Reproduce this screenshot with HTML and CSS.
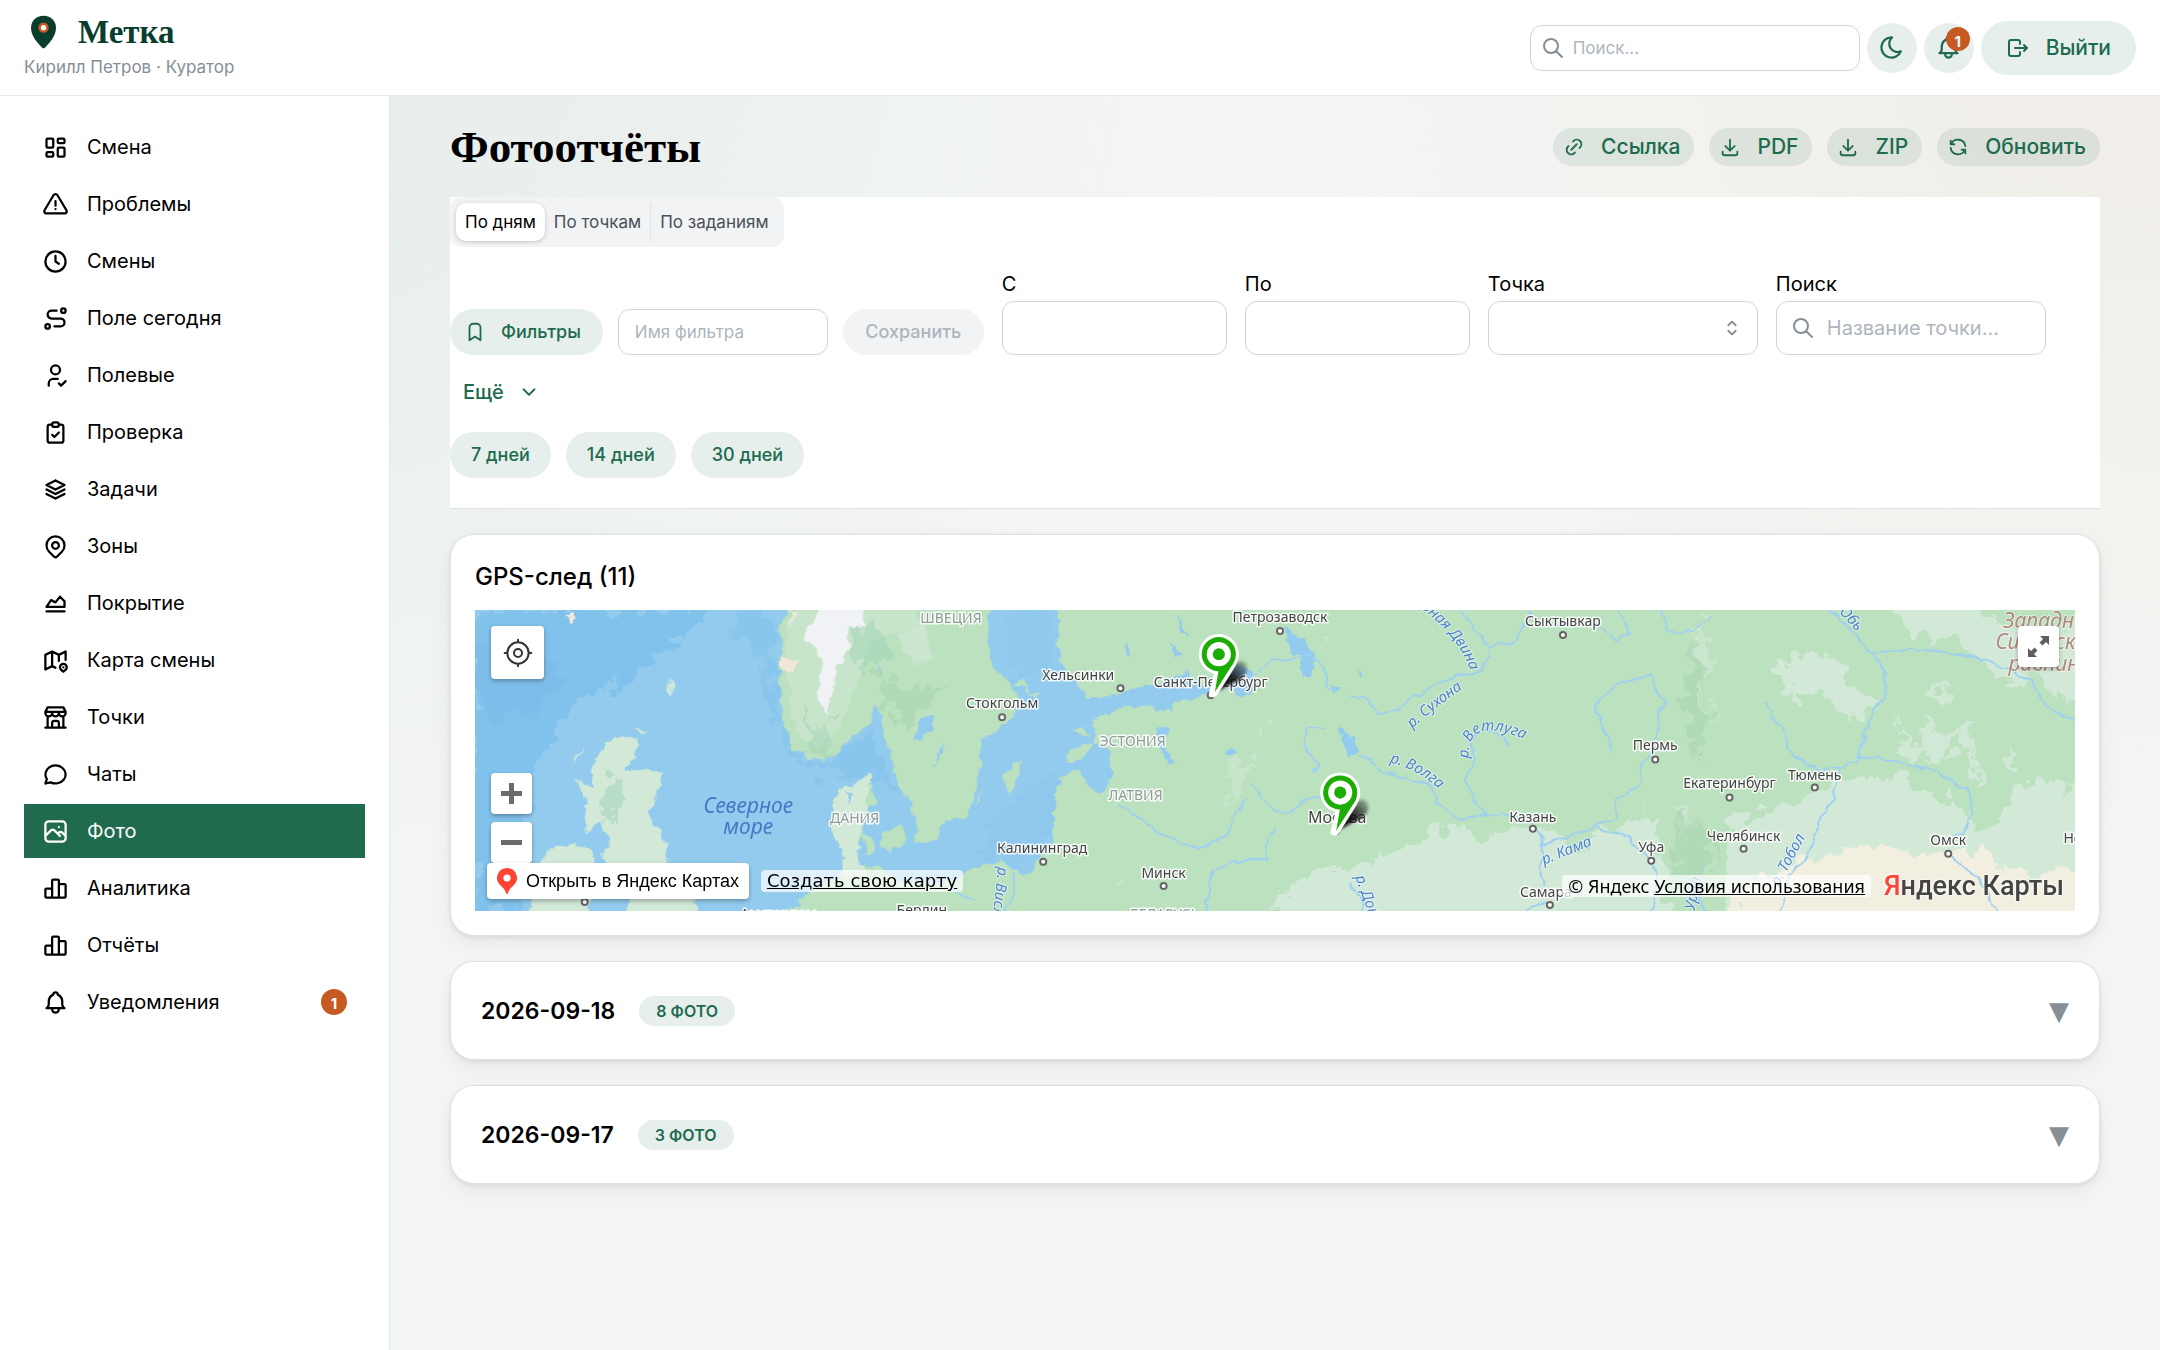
FILE: index.html
```html
<!DOCTYPE html>
<html lang="ru">
<head>
<meta charset="utf-8">
<meta name="viewport" content="width=device-width, initial-scale=1">
<title>Фотоотчёты — Метка</title>
<link rel="stylesheet" href="styles.css">
</head>
<body>
<svg class="sprite" aria-hidden="true">
  <symbol id="i-dashboard" viewBox="0 0 24 24"><path d="M5 4h4a1 1 0 0 1 1 1v6a1 1 0 0 1-1 1h-4a1 1 0 0 1-1-1v-6a1 1 0 0 1 1-1M5 16h4a1 1 0 0 1 1 1v2a1 1 0 0 1-1 1h-4a1 1 0 0 1-1-1v-2a1 1 0 0 1 1-1M15 12h4a1 1 0 0 1 1 1v6a1 1 0 0 1-1 1h-4a1 1 0 0 1-1-1v-6a1 1 0 0 1 1-1M15 4h4a1 1 0 0 1 1 1v2a1 1 0 0 1-1 1h-4a1 1 0 0 1-1-1v-2a1 1 0 0 1 1-1"/></symbol>
  <symbol id="i-alert" viewBox="0 0 24 24"><path d="M12 9v4M10.363 3.591l-8.106 13.534a1.914 1.914 0 0 0 1.636 2.871h16.214a1.914 1.914 0 0 0 1.636-2.87l-8.106-13.536a1.914 1.914 0 0 0-3.274 0zM12 16h.01"/></symbol>
  <symbol id="i-clock" viewBox="0 0 24 24"><path d="M3 12a9 9 0 1 0 18 0a9 9 0 0 0-18 0M12 7v5l3 2"/></symbol>
  <symbol id="i-route" viewBox="0 0 24 24"><path d="M3 19a2 2 0 1 0 4 0a2 2 0 0 0-4 0M19 7a2 2 0 1 0 0-4a2 2 0 0 0 0 4zM11 19h5.5a3.5 3.5 0 0 0 0-7h-8a3.5 3.5 0 0 1 0-7h4.5"/></symbol>
  <symbol id="i-user" viewBox="0 0 24 24"><path d="M8 7a4 4 0 1 0 8 0a4 4 0 0 0-8 0M6 21v-2a4 4 0 0 1 4-4h4M15 19l2 2l4-4"/></symbol>
  <symbol id="i-clipboard" viewBox="0 0 24 24"><path d="M9 5h-2a2 2 0 0 0-2 2v12a2 2 0 0 0 2 2h10a2 2 0 0 0 2-2v-12a2 2 0 0 0-2-2h-2M9 5a2 2 0 0 1 2-2h2a2 2 0 0 1 2 2a2 2 0 0 1-2 2h-2a2 2 0 0 1-2-2zM9 14l2 2l4-4"/></symbol>
  <symbol id="i-stack" viewBox="0 0 24 24"><path d="M12 4l-8 4l8 4l8-4l-8-4M4 12l8 4l8-4M4 16l8 4l8-4"/></symbol>
  <symbol id="i-pin" viewBox="0 0 24 24"><path d="M9 11a3 3 0 1 0 6 0a3 3 0 0 0-6 0M17.657 16.657l-4.243 4.243a2 2 0 0 1-2.827 0l-4.244-4.243a8 8 0 1 1 11.314 0z"/></symbol>
  <symbol id="i-area" viewBox="0 0 24 24"><path d="M4 19h16M4 15l4-6l4 2l4-5l4 4v5h-16"/></symbol>
  <symbol id="i-map" viewBox="0 0 24 24"><path d="M12 18.5l-3-1.5l-6 3v-13l6-3l6 3l6-3v7.5M9 4v13M15 7v5.5M21.121 20.121a3 3 0 1 0-4.242 0c.418.419 1.125 1.045 2.121 1.879c1.051-.89 1.759-1.516 2.121-1.879zM19 18v.01"/></symbol>
  <symbol id="i-store" viewBox="0 0 24 24"><path d="M3 21h18M3 7v1a3 3 0 0 0 6 0v-1m0 1a3 3 0 0 0 6 0v-1m0 1a3 3 0 0 0 6 0v-1h-18l2-4h14l2 4M5 21v-10.15M19 21v-10.15M9 21v-4a2 2 0 0 1 2-2h2a2 2 0 0 1 2 2v4"/></symbol>
  <symbol id="i-chat" viewBox="0 0 24 24"><path d="M3 20l1.3-3.9c-2.324-3.437-1.426-7.872 2.1-10.374c3.526-2.501 8.59-2.296 11.845.48c3.255 2.777 3.695 7.266 1.029 10.501c-2.666 3.235-7.615 4.215-11.574 2.293l-4.7 1"/></symbol>
  <symbol id="i-photo" viewBox="0 0 24 24"><path d="M15 8h.01M3 6a3 3 0 0 1 3-3h12a3 3 0 0 1 3 3v12a3 3 0 0 1-3 3h-12a3 3 0 0 1-3-3zM3 16l5-5c.928-.893 2.072-.893 3 0l5 5M14 14l1-1c.928-.893 2.072-.893 3 0l3 3"/></symbol>
  <symbol id="i-bars" viewBox="0 0 24 24"><path d="M3 13a1 1 0 0 1 1-1h4a1 1 0 0 1 1 1v6a1 1 0 0 1-1 1h-4a1 1 0 0 1-1-1zM15 9a1 1 0 0 1 1-1h4a1 1 0 0 1 1 1v10a1 1 0 0 1-1 1h-4a1 1 0 0 1-1-1zM9 5a1 1 0 0 1 1-1h4a1 1 0 0 1 1 1v14a1 1 0 0 1-1 1h-4a1 1 0 0 1-1-1zM4 20h14"/></symbol>
  <symbol id="i-bell" viewBox="0 0 24 24"><path d="M10 5a2 2 0 1 1 4 0a7 7 0 0 1 4 6v3a4 4 0 0 0 2 3h-16a4 4 0 0 0 2-3v-3a7 7 0 0 1 4-6M9 17v1a3 3 0 0 0 6 0v-1"/></symbol>
  <symbol id="i-search" viewBox="0 0 24 24"><path d="M3 10a7 7 0 1 0 14 0a7 7 0 1 0-14 0M21 21l-6-6"/></symbol>
  <symbol id="i-moon" viewBox="0 0 24 24"><path d="M12 3c.132 0 .263 0 .393 0a7.5 7.5 0 0 0 7.92 12.446a9 9 0 1 1-8.313-12.454z"/></symbol>
  <symbol id="i-logout" viewBox="0 0 24 24"><path d="M14 8v-2a2 2 0 0 0-2-2h-7a2 2 0 0 0-2 2v12a2 2 0 0 0 2 2h7a2 2 0 0 0 2-2v-2M9 12h12l-3-3M18 15l3-3"/></symbol>
  <symbol id="i-link" viewBox="0 0 24 24"><path d="M9 15l6-6M11 6l.463-.536a5 5 0 0 1 7.071 7.072l-.534.464M13 18l-.397.534a5.068 5.068 0 0 1-7.127 0a4.972 4.972 0 0 1 0-7.071l.524-.463"/></symbol>
  <symbol id="i-download" viewBox="0 0 24 24"><path d="M4 17v2a2 2 0 0 0 2 2h12a2 2 0 0 0 2-2v-2M7 11l5 5l5-5M12 4v12"/></symbol>
  <symbol id="i-refresh" viewBox="0 0 24 24"><path d="M20 11a8.1 8.1 0 0 0-15.5-2m-.5-4v4h4M4 13a8.1 8.1 0 0 0 15.5 2m.5 4v-4h-4"/></symbol>
  <symbol id="i-bookmark" viewBox="0 0 24 24"><path d="M18 7v14l-6-4l-6 4v-14a4 4 0 0 1 4-4h4a4 4 0 0 1 4 4z"/></symbol>
  <symbol id="i-chevron" viewBox="0 0 24 24"><path d="M6 9l6 6l6-6"/></symbol>
  <symbol id="i-selector" viewBox="0 0 24 24"><path d="M8 9l4-4l4 4M16 15l-4 4l-4-4"/></symbol>
  <symbol id="i-locate" viewBox="0 0 24 24"><path d="M9 12a3 3 0 1 0 6 0a3 3 0 1 0-6 0M4 12a8 8 0 1 0 16 0a8 8 0 1 0-16 0M12 2v2M12 20v2M20 12h2M2 12h2"/></symbol>
</svg>

<header class="topbar">
  <div class="brand">
    <a class="brand-name" href="#">
      <svg class="brand-pin" viewBox="0 0 26 34" aria-hidden="true"><path fill="#0b3d2e" d="M13 0C5.300 0 0 5.300 0 12.600c0 8.600 6.900 16.100 11.500 20.700a2.200 2.200 0 0 0 3 0C19.100 28.700 26 21.200 26 12.600 26 5.300 20.700 0 13 0z"/><circle cx="13" cy="12.500" r="5.400" fill="#c65a22"/><circle cx="13" cy="12.500" r="2.700" fill="#fff"/></svg>
      <span>Метка</span>
    </a>
    <div class="brand-user">Кирилл Петров · Куратор</div>
  </div>
  <div class="top-tools">
    <label class="search-box top-search"><svg class="icon"><use href="#i-search"/></svg><input type="search" placeholder="Поиск..." aria-label="Поиск"></label>
    <button class="round-btn" aria-label="Тёмная тема"><svg class="icon icon-lg"><use href="#i-moon"/></svg></button>
    <button class="round-btn" aria-label="Уведомления"><svg class="icon icon-lg"><use href="#i-bell"/></svg><span class="count count-over">1</span></button>
    <button class="btn btn-exit"><svg class="icon"><use href="#i-logout"/></svg>Выйти</button>
  </div>
</header>

<div class="shell">
  <nav class="sidebar" aria-label="Разделы">
    <a class="nav-item" href="#"><svg class="icon icon-lg"><use href="#i-dashboard"/></svg>Смена</a>
    <a class="nav-item" href="#"><svg class="icon icon-lg"><use href="#i-alert"/></svg>Проблемы</a>
    <a class="nav-item" href="#"><svg class="icon icon-lg"><use href="#i-clock"/></svg>Смены</a>
    <a class="nav-item" href="#"><svg class="icon icon-lg"><use href="#i-route"/></svg>Поле сегодня</a>
    <a class="nav-item" href="#"><svg class="icon icon-lg"><use href="#i-user"/></svg>Полевые</a>
    <a class="nav-item" href="#"><svg class="icon icon-lg"><use href="#i-clipboard"/></svg>Проверка</a>
    <a class="nav-item" href="#"><svg class="icon icon-lg"><use href="#i-stack"/></svg>Задачи</a>
    <a class="nav-item" href="#"><svg class="icon icon-lg"><use href="#i-pin"/></svg>Зоны</a>
    <a class="nav-item" href="#"><svg class="icon icon-lg"><use href="#i-area"/></svg>Покрытие</a>
    <a class="nav-item" href="#"><svg class="icon icon-lg"><use href="#i-map"/></svg>Карта смены</a>
    <a class="nav-item" href="#"><svg class="icon icon-lg"><use href="#i-store"/></svg>Точки</a>
    <a class="nav-item" href="#"><svg class="icon icon-lg"><use href="#i-chat"/></svg>Чаты</a>
    <a class="nav-item active" href="#" aria-current="page"><svg class="icon icon-lg"><use href="#i-photo"/></svg>Фото</a>
    <a class="nav-item" href="#"><svg class="icon icon-lg"><use href="#i-bars"/></svg>Аналитика</a>
    <a class="nav-item" href="#"><svg class="icon icon-lg"><use href="#i-bars"/></svg>Отчёты</a>
    <a class="nav-item" href="#"><svg class="icon icon-lg"><use href="#i-bell"/></svg>Уведомления<span class="count count-end">1</span></a>
  </nav>

  <main class="content">
    <div class="page-head">
      <h1>Фотоотчёты</h1>
      <div class="actions">
        <button class="btn btn-action"><svg class="icon icon-sm"><use href="#i-link"/></svg>Ссылка</button>
        <button class="btn btn-action"><svg class="icon icon-sm"><use href="#i-download"/></svg>PDF</button>
        <button class="btn btn-action"><svg class="icon icon-sm"><use href="#i-download"/></svg>ZIP</button>
        <button class="btn btn-action"><svg class="icon icon-sm"><use href="#i-refresh"/></svg>Обновить</button>
      </div>
    </div>

    <section class="filters">
      <div class="segments">
        <button class="segment current">По дням</button>
        <button class="segment">По точкам</button>
        <button class="segment divided">По заданиям</button>
      </div>
      <div class="filter-row">
        <div class="saved">
          <button class="btn btn-filter"><svg class="icon icon-sm"><use href="#i-bookmark"/></svg>Фильтры</button>
          <input class="field field-name" type="text" placeholder="Имя фильтра" aria-label="Имя фильтра">
          <button class="btn btn-save" disabled>Сохранить</button>
        </div>
        <div class="labelled date"><label for="from">С</label><input class="field" id="from" type="text"></div>
        <div class="labelled date"><label for="to">По</label><input class="field" id="to" type="text"></div>
        <div class="labelled wide"><label for="point">Точка</label><div class="select-wrap"><select class="field" id="point"><option></option></select><svg class="icon icon-sm"><use href="#i-selector"/></svg></div></div>
        <div class="labelled wide"><label for="q">Поиск</label><div class="search-box"><svg class="icon"><use href="#i-search"/></svg><input id="q" type="search" placeholder="Название точки..."></div></div>
        <button class="btn btn-more">Ещё<svg class="icon icon-sm"><use href="#i-chevron"/></svg></button>
      </div>
      <div class="chips">
        <button class="btn btn-chip">7 дней</button>
        <button class="btn btn-chip">14 дней</button>
        <button class="btn btn-chip">30 дней</button>
      </div>
    </section>

    <section class="card track">
      <h2>GPS-след (11)</h2>
      <div class="map">
        <svg class="map-canvas" viewBox="0 0 1600 300" preserveAspectRatio="xMidYMid slice" role="img" aria-label="Карта">
          <defs>
            <filter id="rough" x="-2%" y="-5%" width="104%" height="110%"><feTurbulence type="fractalNoise" baseFrequency="0.09" numOctaves="3" seed="4" result="n"/><feDisplacementMap in="SourceGraphic" in2="n" scale="11" xChannelSelector="R" yChannelSelector="G"/></filter>
            <filter id="ragged" x="-10%" y="-10%" width="120%" height="120%"><feTurbulence type="fractalNoise" baseFrequency="0.06" numOctaves="4" seed="9" result="n"/><feDisplacementMap in="SourceGraphic" in2="n" scale="36" xChannelSelector="R" yChannelSelector="G"/></filter>
            <filter id="wavy" x="-5%" y="-5%" width="110%" height="110%"><feTurbulence type="fractalNoise" baseFrequency="0.07" numOctaves="2" seed="2" result="n"/><feDisplacementMap in="SourceGraphic" in2="n" scale="9" xChannelSelector="R" yChannelSelector="G"/></filter>
            <filter id="soft"><feGaussianBlur stdDeviation="1.500"/></filter>
            <linearGradient id="shade" x1="0" y1="1" x2="1" y2="0"><stop offset="0" stop-color="#000"/><stop offset=".5" stop-color="#111" stop-opacity=".9"/><stop offset="1" stop-color="#222" stop-opacity=".2"/></linearGradient>
            <path id="p-dvina" d="M920 -20Q986 22 996 66"/>
            <path id="p-sukhona" d="M937 118Q960 96 1000 70"/>
            <path id="p-vetluga" d="M993 148Q990 102 1056 132"/>
            <path id="p-volga" d="M914 152Q950 160 976 192"/>
          </defs>
          <rect width="1600" height="300" fill="#93cbee"/>
          <g fill="#80c2eb" filter="url(#ragged)">
            <path d="M0 0H240L190 40L150 75L100 90L80 130L55 160L50 300H0Z"/>
            <path d="M258 0H300V70L330 160L420 175L395 120L350 158L318 150L296 100L290 50L262 20Z" opacity=".5"/>
            <path d="M520 200L580 160L610 170L560 250L500 250Z" opacity=".25"/>
            <path d="M530 0H578L570 60L540 70Z" opacity=".2"/>
          </g>
          <path d="M40 40L90 60L70 100L20 110L0 80V40Z" fill="#75bae6" filter="url(#ragged)" opacity=".4"/>
          <g fill="#bbe1bf" filter="url(#rough)">
            <path d="M321 -12L304 18L309 30L306 60L309 110L319 137L332 145L348 150L363 143L380 123L397 115L401 90L411 127L420 150L424 173L438 193L443 217L441 232L462 230L470 210L491 207L501 187L506 157L508 130L526 118L539 107L545 90L535 70L516 57L514 27L518 -12Z"/>
            <path d="M399 160L390 167L378 177L365 178L359 193L361 227L369 238L371 260L350 272L329 287L305 312H1620V-12H584V33L587 53L602 73L611 88L643 83L679 73L711 63L739 80L725 87L700 92L696 102L668 95L643 98L620 110L621 133L637 140L636 173L621 183L605 160L589 165L579 187V233L564 247L557 262L539 260L528 248L501 257L478 270L443 273L424 268L405 257L385 255L381 240L389 225L392 200L403 190L398 178Z"/>
            <path d="M530 170L536 153L548 148L543 170L535 184ZM595 143L618 130L614 143L597 151ZM599 120L610 114L612 127ZM553 83L566 79L562 89ZM388 224L400 226L403 240L392 244ZM408 222L427 212L433 230L418 242L407 234ZM500 210L511 165L506 190ZM540 74L550 68L554 82Z"/>
          </g>
          <g fill="#d3e9d8" filter="url(#rough)">
            <path d="M133 130L166 128L164 140L152 160L189 162L185 183L174 203L189 223L196 250L221 287L225 312H148L160 285L140 262L130 245L137 230L126 210L112 222L114 193L103 170L122 177L118 157L130 140Z"/>
            <path d="M76 240L97 233L118 237L122 250L116 312H55L68 253ZM112 137L99 157L103 145ZM163 116L173 120L166 122ZM195 65L201 80L196 86Z"/>
            <path d="M399 160L390 167L378 177L365 178L359 193L361 227L369 238L371 270L390 260L383 240L392 200L396 178Z"/>
            <path d="M325 -12L312 20L314 60L322 120L345 140L370 110L390 60L396 30L450 20L440 -12Z" opacity=".5"/>
            <path d="M424 30L450 10L460 50L440 55Z" opacity=".6"/>
          </g>
          <path d="M352 -10L330 26L342 42L350 50L344 90L352 104L360 80L364 52L376 40L374 14L392 26L388 -10Z" fill="#f1f2f5" filter="url(#rough)"/>
          <g fill="#f0e6da" filter="url(#rough)"><path d="M92 4L100 0L105 10L97 12ZM308 48L324 52L320 62L308 58ZM314 0L322 2L318 16Z"/></g>
          <g fill="#a6d6bb" opacity=".6" filter="url(#ragged)"><path d="M135 165L152 175L142 215L130 200ZM330 90L345 120L362 105L355 145L335 135ZM370 20L400 10L420 50L385 60Z"/></g>
          <g fill="#93cbee" filter="url(#rough)">
            <path d="M447 105L458 106L460 118L450 126L440 130L444 116ZM402 54L410 66L404 62ZM470 130L462 158L464 138ZM372 180L379 184L375 192Z"/>
            <path d="M810 18L826 28L840 44L838 66L828 68L826 50L812 34ZM758 52L776 60L780 78L768 86L752 78ZM694 30L708 44L700 46ZM702 6L712 24L706 24ZM652 30L656 40L654 50L651 38ZM682 118L692 120L692 142L700 154L692 150L684 134ZM748 142L758 136L762 142L754 146ZM863 118L880 130L884 142L874 146ZM855 74L868 78L862 82ZM884 58L888 68L884 66Z"/>
            <path d="M1539 240L1550 243L1545 250L1538 246Z"/>
          </g>
          <g fill="#d3e9d8" filter="url(#ragged)">
            <path d="M795 320L815 275L850 262L880 258L920 240L975 212L1000 226L1060 218L1100 238L1170 200L1190 255L1190 320Z"/>
            <path d="M1245 320L1255 210L1330 185L1375 165L1430 168L1490 200L1500 225L1550 170L1620 180V320Z"/>
            <path d="M1300 48L1350 46L1372 70L1400 100L1370 110L1350 86L1310 82Z"/>
            <path d="M1405 -10L1430 26L1480 32L1530 70L1560 66L1610 100V20L1520 14L1500 -14Z"/>
            <path d="M1415 110L1440 140L1452 100L1465 130L1490 110L1500 160L1480 130L1462 150L1430 150ZM1445 82L1470 76L1462 100ZM1496 150L1508 170L1500 176ZM1530 140L1540 156L1530 160Z" opacity=".9"/>
            <path d="M1220 0L1235 40L1225 80L1238 130L1226 70L1216 40ZM1200 190L1218 215L1205 235Z" opacity=".6"/>
          </g>
          <g fill="#d3e9d8" opacity=".5" filter="url(#ragged)"><path d="M760 152L780 150L762 190L750 196ZM784 120L796 112L790 128ZM846 24L852 32L846 38ZM630 276L650 262L642 282Z"/></g>
          <g fill="#a5d3ac" opacity=".5" filter="url(#ragged)"><path d="M1212 40L1222 20L1228 120L1216 150L1208 90ZM1196 200L1230 220L1238 250L1200 290ZM405 60L440 80L470 70L430 120L410 90Z"/></g>
          <g fill="#f2eee0" filter="url(#ragged)">
            <path d="M1250 320L1262 274L1310 258L1360 236L1440 244L1500 238L1540 266L1600 256L1620 320Z"/>
          </g>
          <g fill="none" stroke="#9fd1ef" stroke-width="2" stroke-linejoin="round" filter="url(#wavy)">
            <path d="M780 66L800 50L836 46L850 58L852 78L864 82"/>
            <path d="M985 0L1015 38L1008 58L960 74L920 100L906 106L890 88L874 86"/>
            <path d="M1015 38L1040 30L1055 2M1062 14L1122 14L1140 30L1154 24L1142 0M1186 0L1190 22L1216 20L1234 6"/>
            <path d="M832 142L830 120L848 118M832 142L846 156L836 160M884 144L910 162L958 176L962 192L982 208L1012 204L1050 206L1068 228L1064 258L1070 276"/>
            <path d="M996 128L998 150L990 170L1000 190L1012 204M996 128L1010 120L1028 126L1032 136"/>
            <path d="M775 172L784 184L800 200L812 204L830 188L850 186"/>
            <path d="M644 194L668 210L684 222L724 238L754 222L760 204L772 188"/>
            <path d="M732 300L738 260L770 248L792 246L796 222L800 218"/>
            <path d="M538 262L540 282L530 300M478 272L484 282L500 290"/>
            <path d="M874 272L888 290V306M1048 298L1070 292"/>
            <path d="M1352 0L1366 12L1384 30L1394 44L1410 64L1408 88L1394 102L1386 130L1380 152L1342 160L1318 148L1300 112L1288 94"/>
            <path d="M1394 44L1410 40L1450 40L1500 46L1530 60L1556 72L1570 96L1600 114"/>
            <path d="M1380 146L1420 150L1460 162L1488 178L1496 206L1484 222L1472 228M1474 246L1500 266L1520 300"/>
            <path d="M1364 158L1356 190L1340 216L1330 246L1312 264L1308 290L1300 304"/>
            <path d="M1136 142L1128 120L1118 96L1140 74L1172 66L1186 90L1180 122L1176 142L1164 154L1166 172L1142 188L1138 206L1118 216L1066 234"/>
            <path d="M1118 216L1152 226L1172 246L1182 262L1176 300M1226 254L1224 290L1230 304"/>
          </g>

          <g class="city">
            <text x="528" y="98">Стокгольм</text><text x="604" y="70">Хельсинки</text><text x="805" y="12">Петрозаводск</text><text x="736" y="77">Санкт-Петербург</text>
            <text x="568" y="242">Калининград</text><text x="689" y="267">Минск</text><text x="862" y="212" class="big">Москва</text><text x="1057" y="211">Казань</text>
            <text x="1087" y="16">Сыктывкар</text><text x="1179" y="140">Пермь</text><text x="1253" y="177">Екатеринбург</text><text x="1338" y="169">Тюмень</text>
            <text x="1267" y="230">Челябинск</text><text x="1175" y="241">Уфа</text><text x="1471" y="234">Омск</text><text x="1070" y="286">Самара</text><text x="1631" y="232">Новосибирск</text>
            <text x="448" y="304">Берлин</text><text x="305" y="308">Амстердам</text>
          </g>
          <g class="country"><text x="477" y="13">ШВЕЦИЯ</text><text x="658" y="136">ЭСТОНИЯ</text><text x="661" y="189">ЛАТВИЯ</text><text x="381" y="212">ДАНИЯ</text><text x="690" y="308">БЕЛАРУСЬ</text></g>
          <g class="sea"><text x="275" y="202">Северное</text><text x="275" y="223">море</text></g>
          <g class="plain"><text x="1526" y="18">Западно-</text><text x="1518" y="39">Сибирская</text><text x="1531" y="61">равнина</text></g>
          <g class="river">
            <text><textPath href="#p-dvina">Северная Двина</textPath></text>
            <text><textPath href="#p-sukhona">р. Сухона</textPath></text>
            <text><textPath href="#p-vetluga">р. Ветлуга</textPath></text>
            <text><textPath href="#p-volga">р. Волга</textPath></text>
            <text transform="translate(880 266) rotate(70)">р. Дон</text>
            <text transform="translate(1068 254) rotate(-22)">р. Кама</text>
            <text transform="translate(1302 276) rotate(-62)">р. Тобол</text>
            <text transform="translate(1362 2) rotate(48)">Обь</text>
            <text transform="translate(524 256) rotate(96)">р. Висла</text>
            <text transform="translate(1218 300) rotate(-78)">Урал</text>
          </g>
          <g fill="#fff" stroke="#666" stroke-width="2">
            <circle cx="528" cy="107" r="3"/><circle cx="646" cy="78" r="3"/><circle cx="805" cy="21" r="3"/><circle cx="736" cy="85" r="3"/><circle cx="569" cy="251" r="3"/><circle cx="689" cy="275" r="3"/><circle cx="861" cy="220" r="3"/><circle cx="1057" cy="218" r="3"/><circle cx="1087" cy="25" r="3"/><circle cx="1179" cy="149" r="3"/><circle cx="1253" cy="187" r="3"/><circle cx="1338" cy="177" r="3"/><circle cx="1267" cy="238" r="3"/><circle cx="1175" cy="250" r="3"/><circle cx="1471" cy="243" r="3"/><circle cx="1074" cy="294" r="3"/><circle cx="112" cy="291" r="3"/>
          </g>
          <g id="marker">
            <path d="M741 82L762 52Q772 48 772 60Q770 68 760 72Z" fill="url(#shade)" filter="url(#soft)"/>
            <circle cx="744" cy="44" r="20" fill="#fff"/>
            <path d="M734 84L740 60L761 55L743 84Q738 90 734 84Z" fill="#fff"/>
            <circle cx="744" cy="44" r="17" fill="#1bad03"/>
            <path d="M744 59L759 52L740 82Z" fill="#1bad03"/>
            <circle cx="744" cy="44" r="12" fill="#fff"/><circle cx="744" cy="44" r="6" fill="#1bad03"/>
          </g>
          <use href="#marker" x="121" y="138"/>
        </svg>
        <button class="map-btn locate" aria-label="Моё местоположение"><svg class="icon icon-xl"><use href="#i-locate"/></svg></button>
        <div class="zoom">
          <button class="map-btn" aria-label="Приблизить"><svg viewBox="0 0 21 21"><path fill="#6b6b6b" d="M8 0h5v8h8v5h-8v8H8v-8H0V8h8z"/></svg></button>
          <button class="map-btn" aria-label="Отдалить"><svg viewBox="0 0 21 21"><path fill="#6b6b6b" d="M0 8h21v5H0z"/></svg></button>
        </div>
        <button class="map-btn full" aria-label="На весь экран"><svg viewBox="0 0 21 21"><path fill="#5f5f5f" d="M21 0v9l-3-3-3.500 3.500-3-3L15 3l-3-3zM0 21v-9l3 3 3.500-3.500 3 3L6 18l3 3z"/></svg></button>
        <div class="map-left">
          <a class="open-map" href="#"><svg viewBox="0 0 20 26" aria-hidden="true"><path fill="#f43" d="M10 0a10 10 0 0 0-7 17.100C6 20 8.500 22 9 25.200q1 1.600 2 0C11.500 22 14 20 17 17.100A10 10 0 0 0 10 0z"/><circle cx="10" cy="10" r="3.600" fill="#fff"/></svg>Открыть в Яндекс Картах</a>
          <a class="map-note" href="#"><u>Создать свою карту</u></a>
        </div>
        <div class="map-right">
          <span class="map-note">© Яндекс <a href="#"><u>Условия использования</u></a></span>
          <a class="map-logo" href="#"><b>Я</b>ндекс Карты</a>
        </div>
      </div>
    </section>

    <button class="card day" aria-expanded="false"><span class="day-date">2026-09-18</span><span class="pill">8 ФОТО</span><span class="caret">▼</span></button>
    <button class="card day" aria-expanded="false"><span class="day-date">2026-09-17</span><span class="pill">3 ФОТО</span><span class="caret">▼</span></button>
  </main>
</div>
</body>
</html>
```
FILE: styles.css
```css
:root {
  --green: #206b4e;
  --mint: #e7efec;
  --line: #ced4da;
  --muted: #868e96;
  --orange: #c65a22;
  --sans: Inter, "Noto Sans", sans-serif;
  --serif: "Liberation Serif", serif;
}
* { box-sizing: border-box; }
body {
  margin: 0;
  min-height: 100vh;
  display: flex;
  flex-direction: column;
  font: 400 20px/30px var(--sans);
  color: #000;
  background:
    radial-gradient(circle 1000px at 12% 0, rgba(32, 107, 78, .07), transparent),
    radial-gradient(circle 900px at 100% 0, rgba(190, 110, 40, .07), transparent),
    #f4f6f5;
}
button, input, select { font: inherit; color: inherit; }
button { border: 0; background: none; padding: 0; cursor: pointer; }
a { color: inherit; text-decoration: none; }
.sprite { display: none; }

.icon {
  width: 24px;
  height: 24px;
  flex: none;
  fill: none;
  stroke: currentColor;
  stroke-width: 2;
  stroke-linecap: round;
  stroke-linejoin: round;
}
.icon-sm { width: 22px; height: 22px; }
.icon-lg { width: 27px; height: 27px; }
.icon-xl { width: 32px; height: 32px; stroke-width: 1.5; }

/* Header */
.topbar {
  display: flex;
  align-items: center;
  justify-content: space-between;
  height: 96px;
  padding: 0 24px;
  background: #fff;
  border-bottom: 1px solid #e4e9ec;
}
.brand-name {
  display: flex;
  align-items: center;
  gap: 22px;
  padding-left: 7px;
  font: 700 33px/36px var(--serif);
  color: #0b3d2e;
}
.brand-pin { width: 25px; height: 34px; }
.brand-user { margin-top: 3px; font-size: 17px; line-height: 28px; color: var(--muted); }
.top-tools { display: flex; align-items: center; gap: 7px; }
.search-box {
  display: flex;
  align-items: center;
  gap: 12px;
  height: 54px;
  padding: 0 14px;
  border: 1px solid var(--line);
  border-radius: 12px;
  background: #fff;
  color: var(--muted);
}
.search-box input { flex: 1; min-width: 0; border: 0; outline: 0; padding: 0; background: none; }
.top-search { width: 330px; height: 46px; gap: 8px; padding: 0 10px; font-size: 17px; }
::placeholder { color: #adb5bd; opacity: 1; }
.round-btn {
  position: relative;
  display: grid;
  place-items: center;
  width: 50px;
  height: 50px;
  border-radius: 50%;
  background: var(--mint);
  color: var(--green);
}
.count {
  display: grid;
  place-items: center;
  width: 26px;
  height: 26px;
  border-radius: 50%;
  background: var(--orange);
  color: #fff;
  font-size: 15px;
  font-weight: 700;
}
.count-over { position: absolute; top: 4px; right: 4px; width: 24px; height: 24px; }
.count-end { margin-left: auto; }
.btn {
  display: inline-flex;
  align-items: center;
  justify-content: center;
  border-radius: 32px;
  background: var(--mint);
  color: var(--green);
  font-weight: 500;
}
.btn-exit { height: 54px; padding: 0 25px; gap: 16px; font-size: 21px; }

/* Sidebar */
.shell { display: flex; flex: 1; }
.sidebar {
  display: flex;
  flex-direction: column;
  gap: 3px;
  flex: 0 0 390px;
  padding: 24px;
  background: #fff;
  border-right: 1px solid #e4e9ec;
}
.nav-item { display: flex; align-items: center; gap: 18px; height: 54px; padding: 0 18px; }
.nav-item.active { background: var(--green); color: #fff; }

/* Content */
.content { flex: 1; min-width: 0; padding: 25px 60px; display: flex; flex-direction: column; gap: 25px; }
.page-head { display: flex; align-items: center; justify-content: space-between; height: 51px; }
h1 { margin: 0; font: 700 45px/50px var(--serif); }
.actions { display: flex; gap: 15px; }
.btn-action { height: 38px; padding: 0 14px 0 10px; gap: 16px; background: rgba(32, 107, 78, .1); font-size: 21px; }

.filters { background: #fff; border-bottom: 1px solid #dee2e6; padding-bottom: 30px; }
.segments { display: inline-flex; padding: 6px; border-radius: 12px; background: #f1f3f5; vertical-align: top; }
.segment { height: 38px; padding: 0 9px; border-radius: 10px; font-size: 17px; color: #495057; }
.segment.current { background: #fff; color: #000; box-shadow: 0 1px 4px rgba(0, 0, 0, .2); }
.segment.divided { border-left: 1px solid #dee2e6; border-radius: 0; }
.filter-row { display: flex; flex-wrap: wrap; align-items: flex-end; gap: 18px; padding-top: 24px; }
.saved { display: flex; gap: 15px; }
.btn-filter { height: 46px; padding: 0 22px 0 14px; gap: 15px; font-size: 18px; }
.field { width: 100%; height: 54px; padding: 0 16px; border: 1px solid var(--line); border-radius: 12px; background: #fff; outline: 0; }
.field-name { width: 210px; height: 46px; font-size: 17px; }
.btn-save { width: 141px; height: 46px; background: #f1f3f5; color: #adb5bd; font-size: 18px; }
.labelled label { display: block; line-height: 26px; margin-bottom: 4px; }
.date { width: 225px; }
.wide { width: 270px; }
.select-wrap { position: relative; }
.select-wrap select { appearance: none; display: block; }
.select-wrap .icon { position: absolute; right: 15px; top: 16px; color: var(--muted); pointer-events: none; }
.btn-more { height: 38px; padding: 0 13px; gap: 14px; background: none; }
.chips { display: flex; gap: 15px; padding-top: 21px; }
.btn-chip { height: 46px; padding: 0 21px; font-size: 18px; }

.card {
  border: 1px solid #dee2e6;
  border-radius: 24px;
  background: #fff;
  box-shadow: 0 2px 5px rgba(0, 0, 0, .08), 0 10px 24px rgba(0, 0, 0, .05);
}
.track { padding: 24px; }
h2 { margin: 0 0 15px; font-size: 24px; line-height: 36px; font-weight: 500; }
.day { display: flex; align-items: center; height: 99px; padding: 0 30px; text-align: left; }
.day-date { font-size: 23px; font-weight: 600; }
.pill { margin-left: 24px; padding: 0 17px; border-radius: 15px; background: var(--mint); color: var(--green); font-size: 16px; font-weight: 600; }
.caret { margin-left: auto; font: 26px/26px "DejaVu Sans", sans-serif; color: var(--muted); }

/* Map */
.map { position: relative; height: 301px; overflow: hidden; }
.map-canvas { display: block; width: 100%; height: 100%; }
.map-canvas text { paint-order: stroke; stroke: rgba(255, 255, 255, .85); stroke-width: 3px; stroke-linejoin: round; }
.city { font: 14px "Noto Sans", sans-serif; fill: #444; text-anchor: middle; }
.city .big { font-size: 16px; }
.country { font: 14px "Noto Sans", sans-serif; fill: #8f9b96; text-anchor: middle; }
.sea { font: italic 21px "Noto Sans", sans-serif; fill: #4279c4; text-anchor: middle; }
.map-canvas .sea text { stroke: none; }
.plain { font: italic 21px "Noto Sans", sans-serif; fill: #b0897d; }
.river { font: italic 15px "Noto Sans", sans-serif; fill: #4b83cf; }
.map-canvas .river text, .map-canvas .plain text { stroke-width: 2px; stroke: rgba(255, 255, 255, .5); }
.map-btn {
  display: grid;
  place-items: center;
  width: 41px;
  height: 41px;
  border-radius: 4px;
  background: #fff;
  box-shadow: 0 2px 4px rgba(0, 0, 0, .3);
}
.map-btn > svg:not(.icon) { width: 21px; height: 21px; }
.locate { position: absolute; left: 16px; top: 16px; width: 53px; height: 53px; color: #333; }
.zoom { position: absolute; left: 16px; top: 163px; display: grid; gap: 8px; }
.full { position: absolute; right: 16px; top: 16px; }
.map-left, .map-right { position: absolute; display: flex; align-items: center; }
.map-left { left: 12px; bottom: 12px; gap: 12px; }
.map-right { right: 11px; bottom: 9px; gap: 13px; }
.open-map {
  display: flex;
  align-items: center;
  gap: 9px;
  height: 36px;
  padding: 0 10px;
  border-radius: 4px;
  background: #fff;
  box-shadow: 0 2px 4px rgba(0, 0, 0, .3);
  font: 18px/36px "Liberation Sans", sans-serif;
}
.open-map svg { width: 20px; height: 26px; }
.map-note { padding: 0 6px; border-radius: 4px; background: rgba(255, 255, 255, .7); font: 18px/22px "DejaVu Sans", sans-serif; }
.map-right .map-note { font-family: "Noto Sans", sans-serif; }
.map-logo { font: 500 27px/32px Roboto, sans-serif; color: #444; text-shadow: 0 0 3px #fff, 0 0 3px #fff; }
.map-logo b { font-weight: 500; color: #f43; }
```
